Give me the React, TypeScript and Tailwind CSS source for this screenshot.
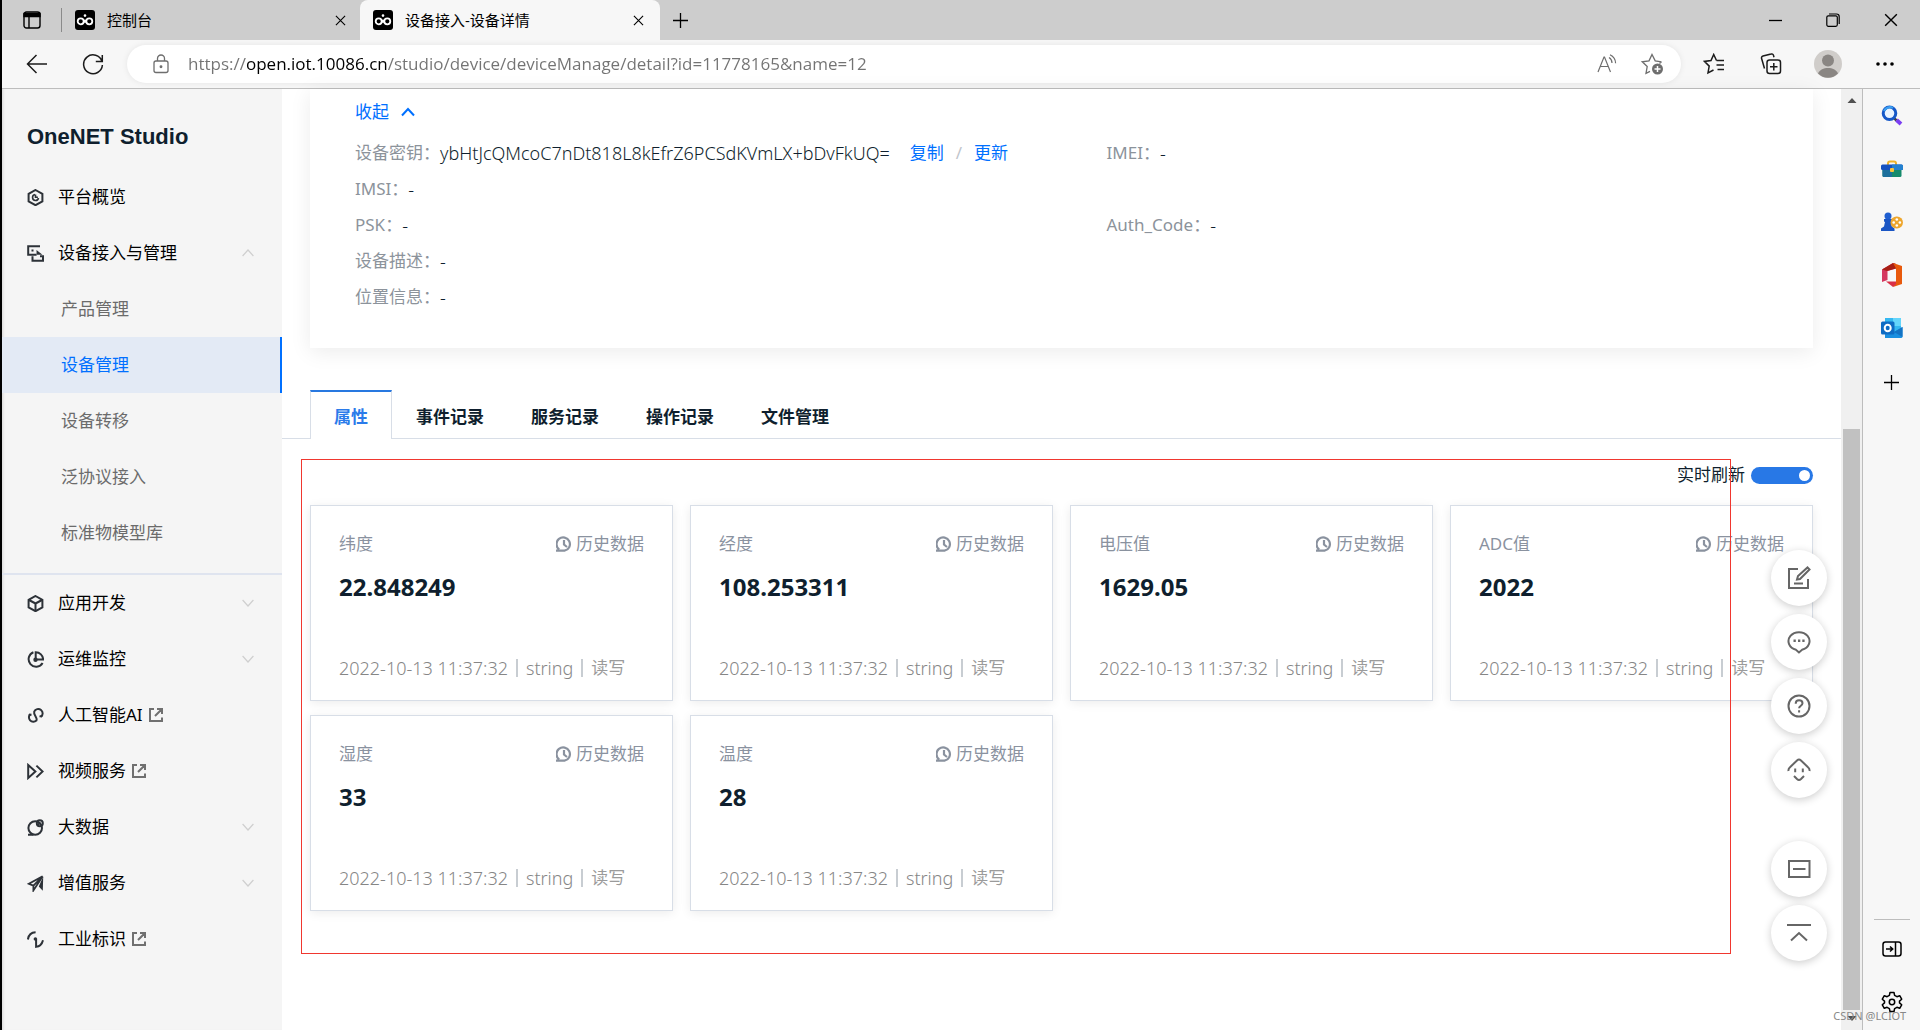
import { useState } from 'react';

type NavItem = { label: string; icon: React.ReactNode; arrow?: 'up' | 'down'; external?: boolean };
type Prop = { name: string; value: string };

const TIME = '2022-10-13 11:37:32';
const PROPS: Prop[] = [
  { name: '纬度', value: '22.848249' },
  { name: '经度', value: '108.253311' },
  { name: '电压值', value: '1629.05' },
  { name: 'ADC值', value: '2022' },
  { name: '湿度', value: '33' },
  { name: '温度', value: '28' },
];
const TABS = ['属性', '事件记录', '服务记录', '操作记录', '文件管理'];
const SUB = ['产品管理', '设备管理', '设备转移', '泛协议接入', '标准物模型库'];

const Ico = ({ s = 20, w = 1.3, vb = '0 0 20 20', children }: { s?: number; w?: number; vb?: string; children: React.ReactNode }) => (
  <svg width={s} height={s} viewBox={vb} fill="none" stroke="currentColor" strokeWidth={w} className="shrink-0" aria-hidden="true">{children}</svg>
);

const Logo = () => (
  <svg width="20" height="20" viewBox="0 0 20 20" fill="none" className="shrink-0" aria-hidden="true">
    <rect width="20" height="20" rx="3" fill="#000" />
    <circle cx="5.7" cy="11.3" r="3" stroke="#fff" strokeWidth="1.8" />
    <circle cx="14.3" cy="11.3" r="3" stroke="#fff" strokeWidth="1.8" />
    <path d="M8.3 9.5 11.7 13M11.7 9.5 8.3 13" stroke="#fff" strokeWidth="1.4" />
    <circle cx="10" cy="5.6" r="1.3" fill="#fff" />
  </svg>
);

const Close = ({ s = 11 }: { s?: number }) => <Ico s={s} vb="0 0 12 12" w={1.2}><path d="M1 1l10 10M11 1 1 11" /></Ico>;
const Plus = () => <Ico s={17} w={1.3} vb="0 0 17 17"><path d="M8.5 1v15M1 8.5h15" /></Ico>;

const NAV_TOP: NavItem[] = [
  { label: '平台概览', icon: <><path d="M8.5 1 15.4 4.9v7.400l-6.900 3.900-6.900-3.900V4.900z" /><path d="M8 5.500a3 3 0 1 0 3.500 3.500M8.500 5.500v2.800h2.400" strokeWidth="1.600" /></> },
  { label: '设备接入与管理', arrow: 'up', icon: <><path d="M13 1.2H1.2v8.600h8.400" /><path d="M9.500 5l6 4.800H9.600z" fill="currentColor" stroke="none" /><path d="M4.500 5.400h2M5.500 11.200v4.600h10.500v-4.600h-3" /></> },
];
const NAV_BOTTOM: NavItem[] = [
  { label: '应用开发', arrow: 'down', icon: <><path d="M8.5 1 15.400 4.900v7.400l-6.900 3.900-6.900-3.900V4.900z" /><path d="M2 5l6.500 3.500L15 5M8.5 8.500v7.500" /></> },
  { label: '运维监控', arrow: 'down', icon: <><path d="M6.400 1.200A7.500 7.500 0 1 0 15.600 12" /><path d="M8.700 1.200v7.400h7.400a7.400 7.400 0 0 0-7.400-7.400z" /><circle cx="8.500" cy="8.800" r="1.200" fill="currentColor" /></> },
  { label: '人工智能AI', external: true, icon: <><path d="M3.400 7a4.400 4.400 0 1 0 6 6.600c1.600-2.700-3.200-5.600-2.200-8.900A4.400 4.400 0 1 1 13.800 10" /><path d="M1.800 8.200 4.500 7.600M15.200 8.800l-2.700.8" /></> },
  { label: '视频服务', external: true, icon: <><path d="M1.200 2v13L8.400 8.500z" /><path d="M9.400 2.600l6.200 5.900-6.200 5.900" /></> },
  { label: '大数据', arrow: 'down', icon: <><circle cx="8.200" cy="9" r="6.800" /><circle cx="12.800" cy="4.200" r="3" /><path d="M1 15.800h5.500M11 5.800l2.200-2" /></> },
  { label: '增值服务', arrow: 'down', icon: <><path d="M15.600 1.400 1.800 8.800l4.600 1.800zM6.400 10.400v5L15.600 1.400" strokeWidth="1.800" /><path d="M16.200 1.600 11.800 11.500l4 4.200z" fill="currentColor" stroke="none" /></> },
  { label: '工业标识', external: true, icon: <><path d="M.9 8.500c.6-4.200 3.400-7 7.700-7.200M16 9.200c-1 3.800-3.700 6.300-6.900 6.600V8" /><circle cx="8.400" cy="8" r="1.800" fill="currentColor" stroke="none" /></> },
];

const NavRow = ({ item }: { item: NavItem }) => (
  <a href="#" className="flex h-14 items-center pl-[25px] pr-7 text-black">
    <span className="mr-3.5 text-[#2d3238]"><Ico s={17} vb="0 0 17 17" w={2}>{item.icon}</Ico></span>
    <span>{item.label}</span>
    {item.external && <span className="ml-1.5 text-[#707070]"><Ico s={14} vb="0 0 14 14" w={2}><path d="M5 1H1v12h12V9.500M8 1h5v5M12.800 1.200 6 8" /></Ico></span>}
    {item.arrow && <span className="ml-auto text-[#cfcfcf]"><Ico s={12} vb="0 0 12 12" w={1.2}>{item.arrow === 'up' ? <path d="M.6 9 6 3l5.400 6" /> : <path d="M.6 3 6 9l5.400-6" />}</Ico></span>}
  </a>
);

const Field = ({ label, value, children }: { label: string; value: string; children?: React.ReactNode }) => (
  <div className="flex h-9 items-center pl-[45px]">
    <span className="text-[#8c939b]">{label}：</span><span className="text-[18px] font-light text-[#0f1f2e]">{value}</span>{children}
  </div>
);

const PropCard = ({ p }: { p: Prop }) => (
  <article className="border border-[#d8dee7] bg-white px-7 pt-[26px] pb-5 shadow-[0_2px_10px_rgba(0,0,0,0.08)]">
    <div className="flex h-6 items-center justify-between text-[#8a929f]">
      <span>{p.name}</span>
      <button className="flex items-center gap-1">
        <Ico s={16} vb="0 0 16 16" w={2.2}><path d="M3.200 13.500A6.700 6.700 0 1 1 8.500 14.700H0M8 4v4.500l3 2.500" /></Ico>历史数据
      </button>
    </div>
    <div className="mt-[15px] h-8 text-2xl leading-8 font-bold text-[#0f1f2e]">{p.value}</div>
    <div className="mt-[53px] flex h-6 items-center gap-2 whitespace-nowrap text-[#868686]">
      <span className="text-[18px] font-light">{TIME}</span><span className="h-[18px] w-0.5 bg-[#c8cdd2]" /><span className="text-[18px] font-light">string</span><span className="h-[18px] w-0.5 bg-[#c8cdd2]" /><span className="text-[#9b9b9b]">读写</span>
    </div>
  </article>
);

const Float = ({ label, children }: { label: string; children: React.ReactNode }) => (
  <button aria-label={label} className="flex size-14 items-center justify-center rounded-full bg-white text-[#666] shadow-[0_2px_8px_rgba(0,0,0,0.2)]">
    <Ico s={24} vb="0 0 24 24" w={2}>{children}</Ico>
  </button>
);

function BrowserChrome() {
  const tb = 'flex w-[57px] items-center justify-center';
  return (
    <header className="border-b border-[#bdbdbd] bg-[#f7f7f7] font-['Open_Sans','Noto_Sans_CJK_SC',sans-serif]">
      <div className="flex h-10 items-center bg-[#cdcdcd] text-[15px] text-black">
        <button aria-label="标签页操作" className="flex w-[59px] justify-center"><Ico s={18} vb="0 0 18 18" w={1.400}><rect x="1" y="1" width="16" height="16" rx="2.500" /><path d="M1 2.500h16v3H1z" fill="currentColor" /><path d="M6 5v12" /></Ico></button>
        <span className="h-6 w-px bg-[#8a8a8a]" />
        <div className="flex h-10 w-[298px] items-center pl-[13px] pr-3.5"><Logo /><span className="ml-3">控制台</span><button aria-label="关闭" className="ml-auto"><Close /></button></div>
        <div className="flex h-10 w-[300px] items-center rounded-t-lg bg-[#f7f7f7] pl-[13px] pr-4"><Logo /><span className="ml-3">设备接入-设备详情</span><button aria-label="关闭" className="ml-auto"><Close /></button></div>
        <button aria-label="新建标签页" className="ml-3"><Plus /></button>
        <div className="ml-auto flex">
          <button aria-label="最小化" className="flex w-[58px] items-center justify-center"><Ico s={13} vb="0 0 13 13"><path d="M0 6.500h13" /></Ico></button>
          <button aria-label="还原" className="flex w-[58px] items-center justify-center"><Ico s={14} vb="0 0 14 14" w={1.200}><rect x=".8" y="2.800" width="10.500" height="10.500" rx="1.500" /><path d="M3 1h7.500a2.700 2.700 0 0 1 2.700 2.700V11" /></Ico></button>
          <button aria-label="关闭窗口" className="flex w-[58px] items-center justify-center"><Close s={14} /></button>
        </div>
      </div>
      <div className="flex h-12 items-center pl-[7px] pr-[7px] text-[#1b1b1b]">
        <button aria-label="后退" className="flex w-14 justify-center"><Ico s={22} vb="0 0 22 22" w={1.500}><path d="M21 11H2M10.500 2 1.500 11l9 9" /></Ico></button>
        <button aria-label="刷新" className="flex w-14 justify-center"><Ico s={22} vb="0 0 22 22" w={1.500}><path d="M20 8.500a9.400 9.400 0 1 0 .4 3.500M20.300 2v6.500h-6.500" /></Ico></button>
        <div className="mr-1 ml-1.5 flex h-[38px] flex-1 items-center rounded-full bg-white pl-6 pr-[18px] text-[#6e6e6e] shadow-[0_0_6px_rgba(0,0,0,0.08)]">
          <Ico s={20} vb="0 0 20 20"><rect x="3" y="7" width="14" height="11.500" rx="2" /><path d="M6.500 7V4.500a3.500 3.500 0 0 1 7 0V7" /><circle cx="10" cy="12.700" r=".8" fill="currentColor" /></Ico>
          <input aria-label="地址栏" readOnly value="https://open.iot.10086.cn/studio/device/deviceManage/detail?id=11778165&name=12" className="ml-[17px] flex-1 bg-[linear-gradient(to_right,#737373_58px,#000_58px,#000_199px,#737373_199px)] bg-clip-text text-[17px] text-transparent outline-none" />
          <button aria-label="大声朗读" className="mr-6"><Ico s={20} vb="0 0 20 20" w={1.200}><path d="M1 18 7 3h.5l6 15M3.200 12.500h8M12 3.500c2 1.200 3 3.200 3 5.500M13 .8c3.500 1.700 5.500 4.500 5.600 8.500" /></Ico></button>
          <button aria-label="添加到收藏夹"><Ico s={22} vb="0 0 22 22" w={1.300}><path d="M20.500 8.800l-6.300-.9L11 1.500 8 7.900l-6.700.9 4.900 4.700L5 20.300l4-2M20.500 8.800 18.500 10.500" /><circle cx="16.500" cy="16" r="5.500" fill="currentColor" stroke="none" /><path d="M16.500 13v6M13.500 16h6" stroke="#fff" strokeWidth="1.500" /></Ico></button>
        </div>
        <button aria-label="收藏夹" className={tb}><Ico s={22} vb="0 0 22 22" w={1.500}><path d="M13.500 7.500 10.700 1.500 8 7.500l-6.600.9 4.800 4.700L5 19.800l5.500-2.800M13.500 7.500H21M13.500 12H21M14.500 16.500H21" /></Ico></button>
        <button aria-label="集锦" className={tb}><Ico s={22} vb="0 0 22 22" w={1.500}><rect x="7" y="7" width="13.500" height="13.500" rx="2.500" /><path d="M13.800 10v7.500M10 13.800h7.500M4.500 15.500 1.600 5.500a2 2 0 0 1 1.400-2.500l8-2a2 2 0 0 1 2.500 1.400l.5 1.800" /></Ico></button>
        <button aria-label="个人资料" className={tb}><svg width="28" height="28" viewBox="0 0 28 28"><circle cx="14" cy="14" r="14" fill="#d0cdca" /><circle cx="14" cy="10.500" r="6" fill="#8a8683" /><path d="M4 23.500c2-4 5.500-5.500 10-5.500s8 1.500 10 5.500A14 14 0 0 1 4 23.500z" fill="#8a8683" /></svg></button>
        <button aria-label="设置及其他" className={tb}><svg width="18" height="4" viewBox="0 0 18 4"><circle cx="2" cy="2" r="1.800" /><circle cx="9" cy="2" r="1.800" /><circle cx="16" cy="2" r="1.800" /></svg></button>
      </div>
    </header>
  );
}

function EdgeSidebar() {
  const b = 'flex h-[53px] w-full items-center justify-center';
  return (
    <aside className="flex w-[58px] flex-col items-center border-l border-[#bdbdbd] bg-[#f7f7f7] text-black">
      <button aria-label="搜索" className={b}>
        <svg width="22" height="22" viewBox="0 0 22 22" fill="none"><path d="M13 13l2.500 2.500" stroke="#444" strokeWidth="2.500" /><path d="M15.500 15 20 19" stroke="#7b3ff2" strokeWidth="4" /><circle cx="8.500" cy="8.300" r="6.300" fill="#eaf4ff" stroke="#1557c8" strokeWidth="3" /><path d="M3 6a6.300 6.300 0 0 1 9-3" stroke="#3aa0f0" strokeWidth="2" /></svg>
      </button>
      <button aria-label="工具" className={b}>
        <svg width="22" height="18" viewBox="0 0 22 18" fill="none"><path d="M7 5V3.500C7 2 7.500 1.500 9 1.500h4c1.500 0 2 .5 2 2V5" stroke="#eeb32c" strokeWidth="2" /><path d="M1.500 9h19v6.500a1.500 1.500 0 0 1-1.500 1.500H3a1.500 1.500 0 0 1-1.500-1.500z" fill="#158a6c" /><path d="M1.500 9H11v8H3a1.500 1.500 0 0 1-1.500-1.500z" fill="#1c6f9c" /><rect y="4.500" width="22" height="5.500" rx="1.500" fill="#1551c0" /><path d="M11 4.500h9.500A1.500 1.500 0 0 1 22 6v4H11z" fill="#2481cf" /><rect x="9" y="8" width="4" height="4" rx="1" fill="#f8c33a" /></svg>
      </button>
      <button aria-label="游戏" className={b}>
        <svg width="22" height="20" viewBox="0 0 22 20"><circle cx="7" cy="4" r="3.500" fill="#1f5ed0" /><path d="M3 7h8v2.500l-1 .5.800 4.500 2.700 2V19H0v-2.500l3-2L4 10l-1-.5z" fill="#1a55c4" /><rect x="9.500" y="4.500" width="12.500" height="12" rx="6" fill="#eea62d" /><g fill="#fff"><circle cx="15.800" cy="7.500" r="1.300" /><circle cx="15.800" cy="13.500" r="1.300" /><circle cx="12.700" cy="10.500" r="1.300" /><circle cx="18.900" cy="10.500" r="1.300" /></g></svg>
      </button>
      <button aria-label="Office" className={b}>
        <svg width="22" height="24" viewBox="0 0 22 24"><path d="M1 6.500 12 0l3 1v4.500L6.500 8v9L1 19z" fill="#d5375f" /><path d="M1 6.500 12 0l3 1v4.500L6 8z" fill="#a81f14" /><path d="M12 0l9 3v18l-9 3 3-5V5.500z" fill="#e8590c" /><path d="M5 18.500h10V21l-3 3z" fill="#d92f46" /></svg>
      </button>
      <button aria-label="Outlook" className={b}>
        <svg width="22" height="22" viewBox="0 0 22 22" fill="none"><path d="M4 1h16v16H4z" fill="#35b8f1" /><path d="M12 1h8v8h-8z" fill="#64d5fb" /><path d="M4 21h16a1.500 1.500 0 0 0 1.500-1.500V10L12 15.500 4 13z" fill="#1a8fe0" /><path d="M21.500 10v10L13 15z" fill="#1373c4" /><rect y="4.500" width="13.500" height="13" rx="1.500" fill="#0f6cc4" /><ellipse cx="6.700" cy="11" rx="3" ry="3.300" stroke="#fff" strokeWidth="2" /></svg>
      </button>
      <button aria-label="添加" className="flex h-14 w-full items-center justify-center"><Plus /></button>
      <div className="mt-auto flex w-full flex-col items-center pb-0.5">
        <span className="mb-0.5 h-px w-9 bg-[#bdbdbd]" />
        <button aria-label="隐藏边栏" className={b}><Ico s={20} w={1.500}><rect x="1" y="3" width="18" height="14" rx="2.500" /><path d="M13.500 3v14M4 10h6.500M8 7.500l2.700 2.500L8 12.500" /></Ico></button>
        <button aria-label="设置" className={b}><Ico s={22} vb="0 0 22 22" w={1.500}><path d="M9 1.500h4l.6 2.900 2.300 1.300 2.800-1 2 3.500-2.200 1.900v1.800l2.200 1.900-2 3.500-2.800-1-2.300 1.300-.6 2.900H9l-.6-2.900-2.300-1.300-2.800 1-2-3.500 2.200-1.900v-1.800L1.300 8.200l2-3.500 2.800 1 2.300-1.300z" strokeLinejoin="round" /><circle cx="11" cy="11" r="2.700" /></Ico></button>
      </div>
    </aside>
  );
}

export default function App() {
  const [tab, setTab] = useState(TABS[0]);
  const [live, setLive] = useState(true);

  return (
    <div className="relative flex h-screen flex-col overflow-hidden border-l-2 border-black bg-white font-['Noto_Sans','Noto_Sans_CJK_SC',sans-serif] text-[17px] leading-6">
      <BrowserChrome />
      <div className="flex min-h-0 flex-1">
        <nav className="w-[280px] shrink-0 bg-[#f5f5f5] shadow-[inset_3px_0_3px_-2px_rgba(0,0,0,0.12)]">
          <h1 className="flex h-20 items-center pt-4 pl-[25px] font-['Liberation_Sans',sans-serif] text-[22px] font-bold text-[#0f1f2e]">OneNET Studio</h1>
          {NAV_TOP.map(n => <NavRow key={n.label} item={n} />)}
          {SUB.map(s => (
            <a key={s} href="#" className={`flex h-14 items-center pl-[59px] ${s === '设备管理' ? 'border-r-2 border-[#0070ff] bg-[#e3eaf5] text-[#0070ff]' : 'text-[#6b6b6b]'}`}>{s}</a>
          ))}
          <div className="mt-3 h-0.5 bg-[#dfe4ef]" />
          {NAV_BOTTOM.map(n => <NavRow key={n.label} item={n} />)}
        </nav>

        <main className="relative min-w-0 flex-1">
          <section className="ml-7 mr-7 bg-white pt-[9px] pb-[33px] shadow-[0_4px_20px_rgba(0,0,0,0.08)]">
            <button className="ml-[45px] flex h-7 items-center gap-3 text-[#0070ff]">收起<Ico s={14} vb="0 0 14 14" w={2}><path d="M1 10.500 7 4l6 6.500" /></Ico></button>
            <div className="mt-[9px] grid grid-cols-2">
              <Field label="设备密钥" value="ybHtJcQMcoC7nDt818L8kEfrZ6PCSdKVmLX+bDvFkUQ=">
                <a href="#" className="ml-5 text-[#0070ff]">复制</a><span className="mx-3 text-[#bfc5cc]">/</span><a href="#" className="text-[#0070ff]">更新</a>
              </Field>
              <Field label="IMEI" value="-" />
              <div className="col-span-2"><Field label="IMSI" value="-" /></div>
              <Field label="PSK" value="-" />
              <Field label="Auth_Code" value="-" />
              <div className="col-span-2"><Field label="设备描述" value="-" /></div>
              <div className="col-span-2"><Field label="位置信息" value="-" /></div>
            </div>
          </section>

          <div className="mt-[42px] flex h-[49px] gap-px border-b border-[#d8dee7] pl-7">
            {TABS.map(t => (
              <button key={t} onClick={() => setTab(t)} className={`px-[23px] font-bold ${tab === t ? '-mb-px border-x border-t-2 border-x-[#d8dee7] border-t-[#2878e0] bg-white pt-[3px] text-[#2b7bea]' : 'pt-1.5 text-[#0f1f2e]'}`}>{t}</button>
            ))}
          </div>

          <section className="px-7 pt-6">
            <label className="mb-[18px] flex h-6 items-center justify-end gap-1.5 text-[#0f1f2e]">实时刷新
              <input type="checkbox" checked={live} onChange={e => setLive(e.target.checked)} className="flex h-[17px] w-[62px] appearance-none items-center rounded-full bg-gray-300 px-[3px] before:size-[11px] before:rounded-full before:bg-white checked:justify-end checked:bg-[#2878e6]" />
            </label>
            <div className="grid grid-cols-4 gap-x-[17px] gap-y-3.5">
              {PROPS.map(p => <PropCard key={p.name} p={p} />)}
            </div>
          </section>

          {/* highlighted area */}
          <div className="pointer-events-none absolute top-[370px] right-[110px] left-[19px] h-[495px] border border-[#f0372f]" />

          <div className="absolute top-[461px] right-3.5 flex flex-col gap-2">
            <Float label="反馈"><path d="M11 3H2v19h19v-9M7 17.500h9M10 13.500l1-3.500L20.500 1.500l2 2L13 13z" /></Float>
            <Float label="消息"><path d="M12 22.500 9 19.800A10.500 9 0 1 1 15 19.800z" /><path d="M6.500 10.700h2.300M11 10.700h2.300M15.300 10.700h2.300" strokeWidth="2.400" /></Float>
            <Float label="帮助"><circle cx="12" cy="12" r="10.500" /><path d="M8.700 9.800c0-4.800 6.800-4.300 6.800-.5 0 2.500-3.400 2.400-3.400 5M12.100 16.200v2.200" /></Float>
            <Float label="客服"><path d="M1.500 13c-.3-2 .3-2.800 1.500-3.800L10 2.500c1.300-1.200 2.700-1.200 4 0l7 6.700c1.200 1 1.800 1.800 1.500 3.800M8.200 10.500v3.700M15.800 10.500v3.700M7 18l3 3c1.300 1.200 2.700 1.200 4 0l3-3" /></Float>
            <div className="h-[27px]" />
            <Float label="收起工具"><rect x="2" y="4" width="20.500" height="16" /><path d="M6 12h12.500" /></Float>
            <Float label="返回顶部"><path d="M0 4h24M4 19.500 12 12l8 7.500" /></Float>
          </div>
        </main>

        <div className="flex w-[21px] shrink-0 flex-col items-center bg-[#f0f0f0] text-[#505050]">
          <svg width="10" height="22" viewBox="0 0 10 22"><path d="M.5 14 5 9l4.500 5z" fill="currentColor" /></svg>
          <div className="mt-[318px] w-[17px] flex-1 bg-[#c1c1c1]" />
          <svg width="10" height="20" viewBox="0 0 10 20"><path d="M.5 6 5 11l4.500-5z" fill="currentColor" /></svg>
        </div>
        <EdgeSidebar />
      </div>
      <span className="pointer-events-none absolute right-3.5 bottom-1 font-['Noto_Sans',sans-serif] text-[11px] leading-5 text-[#888]">CSDN @LCIOT</span>
    </div>
  );
}
